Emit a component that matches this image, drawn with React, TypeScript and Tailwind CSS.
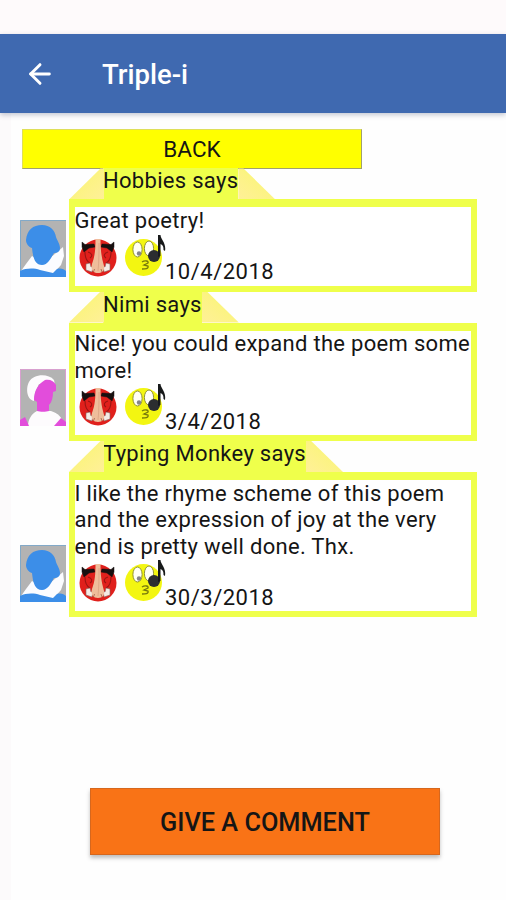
import { ArrowLeft } from 'lucide-react'

type Comment = {
  id: number
  author: string
  avatar: 'blue' | 'pink'
  lines: string[]
  date: string
}

const comments: Comment[] = [
  { id: 1, author: 'Hobbies', avatar: 'blue', lines: ['Great poetry!'], date: '10/4/2018' },
  {
    id: 2,
    author: 'Nimi',
    avatar: 'pink',
    lines: ['Nice! you could expand the poem some', 'more!'],
    date: '3/4/2018',
  },
  {
    id: 3,
    author: 'Typing Monkey',
    avatar: 'blue',
    lines: [
      'I like the rhyme scheme of this poem',
      'and the expression of joy at the very',
      'end is pretty well done. Thx.',
    ],
    date: '30/3/2018',
  },
]

function BlueAvatar() {
  return (
    <svg viewBox="0 0 46 57" className="block h-[57px] w-[46px]">
      <rect width="46" height="57" fill="#b3b3b3" />
      <path d="M.5 57V.5H46" fill="none" stroke="#82a9c8" />
      <path d="M12 36 6 44 1 51l16-1 16 4 8-9 3-9-1-9-7 6-12 10z" fill="#fbfcff" />
      <path
        d="M6 20C7 10 13 5 22 5c8 0 13 5 14 12 1 3 4 7 4 11 0 4-3 5-6 5-3 5-6 12-12 12-7 0-9-7-10-17-4-1-6-5-6-8z"
        fill="#3c8ee8"
      />
      <path d="M0 57v-6c6-3 14-3 20-1l13 3 4-4c4-1 7 0 9 2v6z" fill="#3c8ee8" />
    </svg>
  )
}

function PinkAvatar() {
  return (
    <svg viewBox="0 0 46 57" className="block h-[57px] w-[46px]">
      <rect width="46" height="57" fill="#b3b3b3" />
      <path d="M.5 57V.5h45V57" fill="none" stroke="#d8a0cf" />
      <path
        d="M14 32C6 30 6 18 9 13c4-8 19-9 25-2l1 5-16-1-4 9z"
        fill="#fdfbfd"
      />
      <path d="M8 57c0-6 3-12 9-15h14c7 2 11 7 12 11l-3 4z" fill="#fdfbfd" />
      <path
        d="M14 31c0-9 4-16 11-20 5-1 9 1 11 5v6l-3 1c0 5-1 10-4 13v6c-3 1-9 1-12 0V33z"
        fill="#e24ddb"
      />
      <path d="M0 57v-6l5-3 4 9zM46 57v-4l-5-4-7 8z" fill="#e24ddb" />
    </svg>
  )
}

// Red face: black brows, long nose, gritted teeth
function AngryFace() {
  return (
    <svg viewBox="0 0 38 40" className="block h-10 w-[38px]">
      <circle cx="19" cy="20" r="18.5" fill="#e0201c" />
      <path d="M6 14c0 5 1 9 5 11M32 14c0 5-1 9-5 11" fill="none" stroke="#9a1512" strokeWidth="1.1" />
      <path d="M9 14c4 1 5 4 2 6M29 14c-4 1-5 4-2 6" fill="none" stroke="#9a1512" strokeWidth="1.1" />
      <path d="M3 4l3 2.500 9-.5 1 3-6 1-5 4-2-5zM35 4l-3 2.500-9-.5-1 3 6 1 5 4 2-5z" fill="#171010" stroke="#171010" strokeWidth=".5" />
      <path d="M7 26l4-1 1 4 2-1-1 6-6-2zM31 26l-4-1-1 4-2-1 1 6 6-2z" fill="#f5ebe5" stroke="#84655f" strokeWidth=".6" />
      <path
        d="M16.500 1h5c0 11 1 18 3 25 2 6-1 9-5.500 9s-7.500-3-6-9c3-8 3.500-15 3.500-25z"
        fill="#efbd9b"
      />
      <path d="M20 5c0 10 0 18-1 28" fill="none" stroke="#d9a283" strokeWidth=".8" />
      <path d="M15.500 31l-1 3M22 31l1 3" fill="none" stroke="#9d6149" strokeWidth=".8" />
    </svg>
  )
}

// Yellow whistling face with a music note
function WhistlingFace() {
  return (
    <svg viewBox="0 0 42 42" className="block h-[42px] w-[42px]">
      <circle cx="18.500" cy="22.500" r="18.500" fill="#f3f611" />
      <ellipse cx="12.500" cy="14.500" rx="4.600" ry="7.500" fill="#fffff5" stroke="#85872b" strokeWidth=".9" />
      <ellipse cx="24" cy="13.500" rx="4.600" ry="7.500" fill="#fffff5" stroke="#85872b" strokeWidth=".9" />
      <circle cx="14" cy="18.500" r="2.200" fill="#85858a" />
      <path
        d="M17 27c3-2 7-1 6 1l-4 2 4 1c1 3-3 3-6 3"
        fill="none"
        stroke="#77790c"
        strokeWidth="1.3"
      />
      <circle cx="29" cy="21" r="6" fill="#2b2d30" />
      <path d="M33 22V0h2.500c0 4 6 8 4.500 16l-1.500-1c0-4-1-5-3-6v12z" fill="#17191a" />
    </svg>
  )
}

// Shared fill for both slanted ends of the name tab
function TabFold({ side }: { side: 'left' | 'right' }) {
  const shape =
    side === 'left'
      ? 'bg-linear-to-br [clip-path:polygon(0_100%,90%_0,100%_0,100%_100%)] w-[35px]'
      : 'bg-linear-to-bl [clip-path:polygon(0_0,14%_0,100%_100%,0_100%)] w-[37px]'
  return <div className={`${shape} shrink-0 from-[#efff4b] from-15% via-[#fcf383] via-50% to-[#fff098]`} />
}

function CommentRow({ comment }: { comment: Comment }) {
  return (
    <div className="flex items-end gap-[3px] pl-5">
      <div className="mb-[15px] shrink-0">
        {comment.avatar === 'blue' ? <BlueAvatar /> : <PinkAvatar />}
      </div>
      <div className="w-[408px]">
        {/* Name tab with folded corners */}
        <div className="flex h-[31px]">
          <TabFold side="left" />
          <div className="-ml-px bg-[#efff4b] text-[22px] leading-[26px] tracking-[0.3px] whitespace-nowrap">
            {comment.author} says
          </div>
          <TabFold side="right" />
        </div>
        <div className="border-x-[6px] border-t-[8px] border-b-[6px] border-[#efff4b] bg-white pt-[0.6px]">
          {comment.lines.map((line) => (
            <p key={line} className="-ml-[0.5px] text-[22px] leading-[26.5px] tracking-[0.3px] whitespace-nowrap">
              {line}
            </p>
          ))}
          <div className="flex h-[51px] items-start pl-1">
            <div className="mt-[3px]">
              <AngryFace />
            </div>
            <div className="ml-2">
              <WhistlingFace />
            </div>
            <span className="mt-[24.5px] -ml-0.5 text-[22px] leading-[26px] tracking-[0.5px]">
              {comment.date}
            </span>
          </div>
        </div>
      </div>
    </div>
  )
}

export default function App() {
  return (
    <div className="flex h-[900px] w-[506px] flex-col overflow-hidden bg-[#fefefe] font-['Roboto',sans-serif] text-[#151515]">
      <div className="h-[34px] shrink-0 bg-[#fefafb]" />
      <header className="relative flex h-[79px] shrink-0 items-center bg-[#3f69b0] pl-6 text-white shadow-[0_2px_5px_rgba(60,70,110,0.3)]">
        <ArrowLeft size={32} strokeWidth={2.2} />
        <h1 className="ml-[46px] pt-[3px] text-[27.5px] leading-8 font-medium">Triple-i</h1>
      </header>

      <main className="flex flex-1 flex-col border-l-[11px] border-[#fcfafb]">
        <button className="mt-4 ml-[11px] h-10 w-[340px] shrink-0 border border-t-[#dfdf58] border-r-[#a0a070] border-b-[#a0a070] border-l-[#dfdf58] bg-[#ffff00] text-[22.5px] leading-none">
          BACK
        </button>
        <div className="-mt-[0.6px] -ml-[11px]">
          {comments.map((comment) => (
            <CommentRow key={comment.id} comment={comment} />
          ))}
        </div>
        <button className="mt-auto mb-[45px] ml-[79px] h-[67px] w-[350px] border border-[#d6671d] bg-[#f97316] pt-[3px] text-[25.3px] font-medium shadow-[0_3px_4px_rgba(0,0,0,0.25)]">
          GIVE A COMMENT
        </button>
      </main>
    </div>
  )
}
